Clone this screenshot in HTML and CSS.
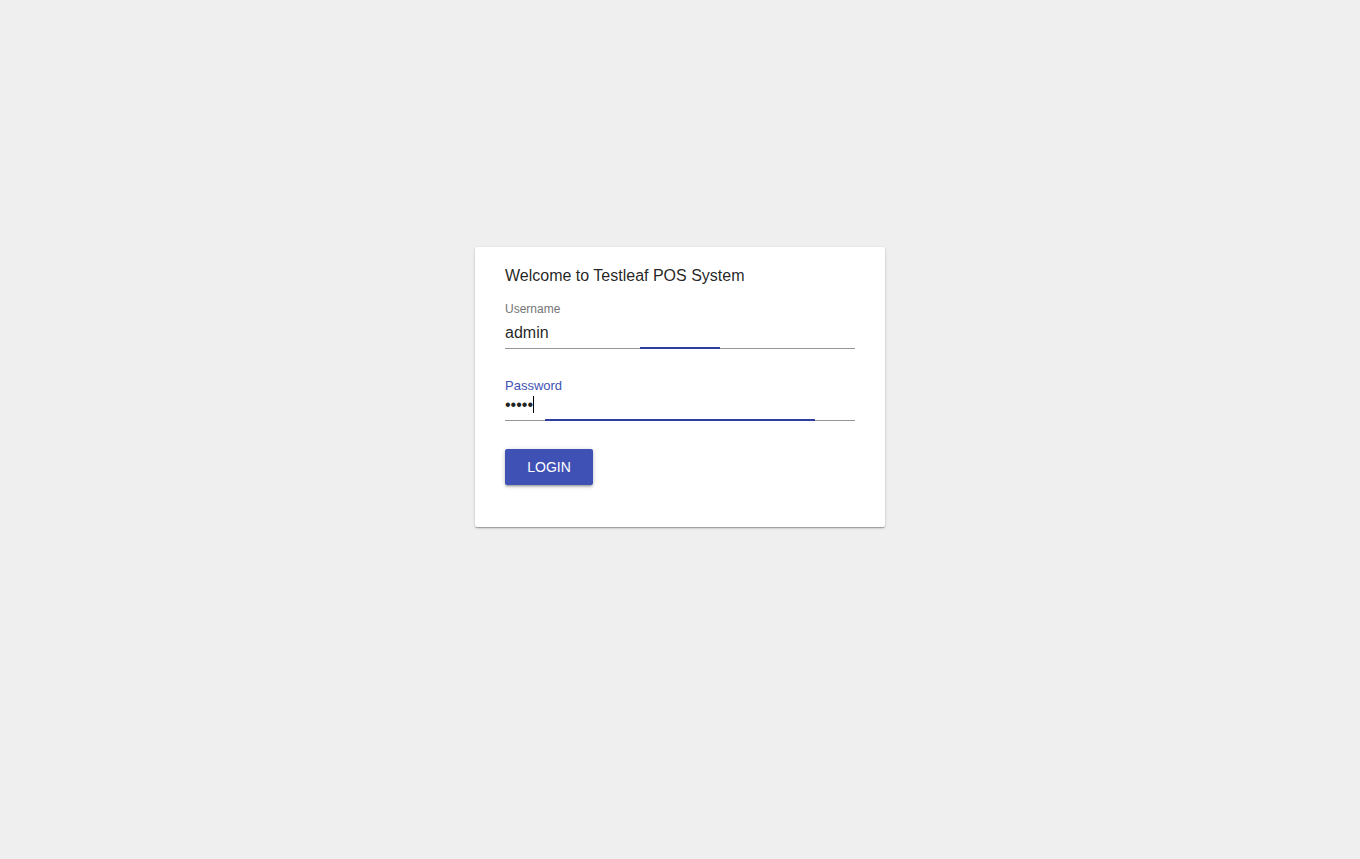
FILE: index.html
```html
<!DOCTYPE html>
<html>
<head>
<meta charset="utf-8">
<link rel="stylesheet" href="styles.css">
</head>
<body>
<div class="page">
  <div class="card">
    <div class="title">Welcome to Testleaf POS System</div>
    <div class="field first">
      <div class="label">Username</div>
      <div class="input user"><span>admin</span></div>
      <div class="focus-line" style="left:135px;width:80px"></div>
    </div>
    <div class="field second">
      <div class="label active">Password</div>
      <div class="input pass"><span class="dots">•••••</span><span class="caret"></span></div>
      <div class="focus-line" style="left:40px;width:270px"></div>
    </div>
    <button class="btn">LOGIN</button>
  </div>
</div>
</body>
</html>
```

FILE: styles.css
```css
html, body {
  margin: 0;
  padding: 0;
  background: #efefef;
  font-family: "Liberation Sans", Arial, sans-serif;
}
.page {
  height: 859px;
  display: flex;
  justify-content: center;
  align-items: flex-start;
  padding-top: 247px;
  box-sizing: border-box;
}
.card {
  width: 410px;
  box-sizing: border-box;
  background: #fff;
  border-radius: 2px;
  padding: 18px 30px 42px;
  box-shadow: 0 1px 3px 0 rgba(0,0,0,0.2), 0 1px 1px 0 rgba(0,0,0,0.14), 0 2px 1px -1px rgba(0,0,0,0.12);
}
.title {
  font-size: 16px;
  line-height: 20px;
  padding-top: 1px;
  margin-bottom: -1px;
  color: rgba(0,0,0,0.87);
}
.field {
  position: relative;
}
.field.first { margin-top: 17px; }
.field.second { margin-top: 30px; }
.label {
  font-size: 12px;
  line-height: 14px;
  color: #757575;
}
.label.active {
  font-size: 13px;
  color: #3f51b5;
}
.input {
  font-size: 16px;
  line-height: 19px;
  color: rgba(0,0,0,0.87);
  border-bottom: 1px solid #949494;
  display: flex;
  align-items: center;
}
.input.user { padding: 7px 0 6px; }
.input.pass { padding: 2px 0 6px; }
.dots {
  font-size: 16px;
  color: #222;
}
.caret {
  display: inline-block;
  width: 1px;
  height: 17px;
  background: #000;
}
.focus-line {
  position: absolute;
  bottom: 0;
  height: 2px;
  background: #303f9f;
}
.btn {
  display: block;
  margin-top: 28px;
  width: 88px;
  height: 36px;
  border: none;
  border-radius: 2px;
  background: #3f51b5;
  color: #fff;
  font-family: "Liberation Sans", Arial, sans-serif;
  font-size: 14px;
  padding: 0;
  box-shadow: 0 1px 5px 0 rgba(0,0,0,0.2), 0 2px 2px 0 rgba(0,0,0,0.14), 0 3px 1px -2px rgba(0,0,0,0.12);
}
```
